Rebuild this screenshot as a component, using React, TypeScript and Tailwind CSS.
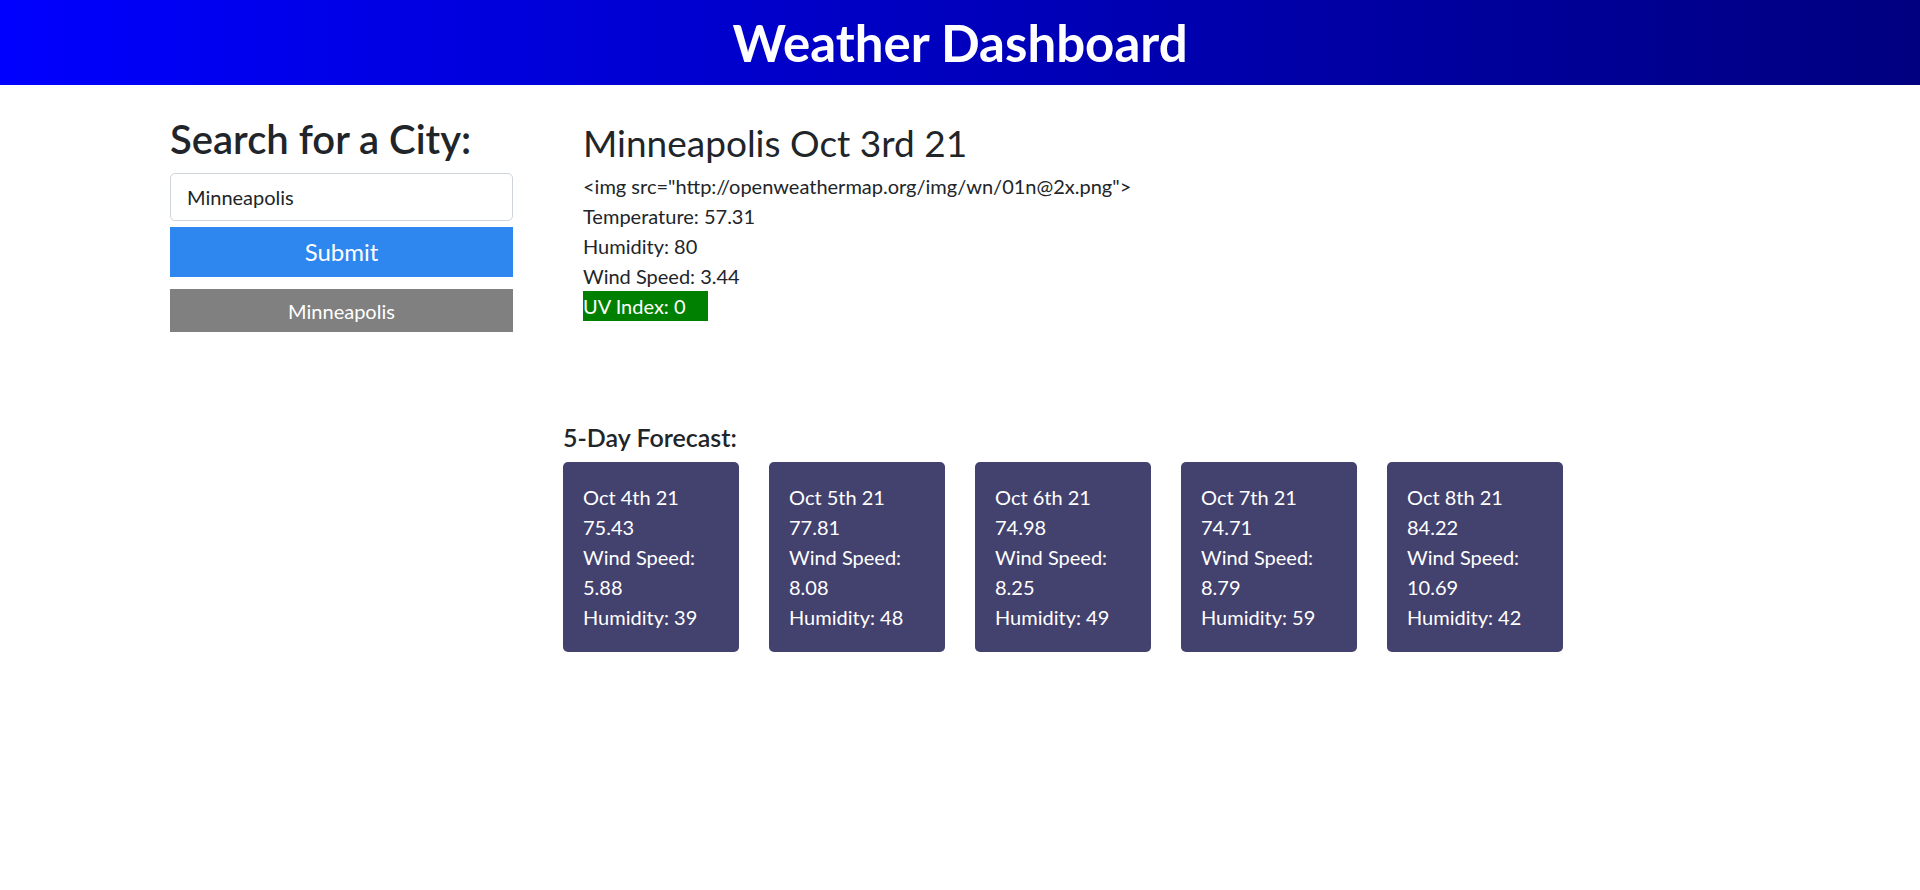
import React from 'react';

const forecast = [
  { date: 'Oct 4th 21', temp: '75.43', wind: '5.88', humidity: '39' },
  { date: 'Oct 5th 21', temp: '77.81', wind: '8.08', humidity: '48' },
  { date: 'Oct 6th 21', temp: '74.98', wind: '8.25', humidity: '49' },
  { date: 'Oct 7th 21', temp: '74.71', wind: '8.79', humidity: '59' },
  { date: 'Oct 8th 21', temp: '84.22', wind: '10.69', humidity: '42' },
];

const App: React.FC = () => {
  return (
    <div className="min-h-screen bg-white text-[#212529] font-['Lato',sans-serif]">
      <header className="h-[85px] bg-gradient-to-r from-[#0000ff] to-[#000080] flex items-center justify-center">
        <h1 className="text-white font-bold text-[51px] leading-[1.2]">Weather Dashboard</h1>
      </header>

      <main className="flex pl-[170px] pt-[30px]">
        <aside className="w-[343px] shrink-0">
          <h2 className="text-[40px] font-semibold leading-[1.2] mb-[10px]">Search for a City:</h2>
          <input
            type="text"
            defaultValue="Minneapolis"
            className="block w-full h-[48px] px-4 text-[20px] border border-[#ced4da] rounded-[5px] text-[#212529] outline-none"
          />
          <button className="block w-full h-[50px] mt-[6px] bg-[#2e86ef] text-white text-[24px]">
            Submit
          </button>
          <button className="block w-full h-[43px] mt-[12px] bg-[#808080] text-white text-[20px]">
            Minneapolis
          </button>
        </aside>

        <section className="ml-[50px]">
          <div className="pl-[20px] pt-[6px]">
            <h2 className="text-[37px] font-normal leading-[1.2] mb-[6px]">Minneapolis Oct 3rd 21</h2>
            <div className="text-[20px] leading-[30px]">
              <p>&lt;img src="http://openweathermap.org/img/wn/01n@2x.png"&gt;</p>
              <p>Temperature: 57.31</p>
              <p>Humidity: 80</p>
              <p>Wind Speed: 3.44</p>
              <p className="w-[125px] bg-[#008000] text-white">UV Index: 0</p>
            </div>
          </div>

          <h5 className="mt-[101px] text-[25px] font-semibold leading-[30px] mb-[10px]">5-Day Forecast:</h5>
          <div className="flex gap-[30px]">
            {forecast.map((d) => (
              <div
                key={d.date}
                className="w-[176px] h-[190px] bg-[#43416e] rounded-[5px] p-5 text-white text-[20px] leading-[30px]"
              >
                <p>{d.date}</p>
                <p>{d.temp}</p>
                <p>Wind Speed:</p>
                <p>{d.wind}</p>
                <p>Humidity: {d.humidity}</p>
              </div>
            ))}
          </div>
        </section>
      </main>
    </div>
  );
};

export default App;
